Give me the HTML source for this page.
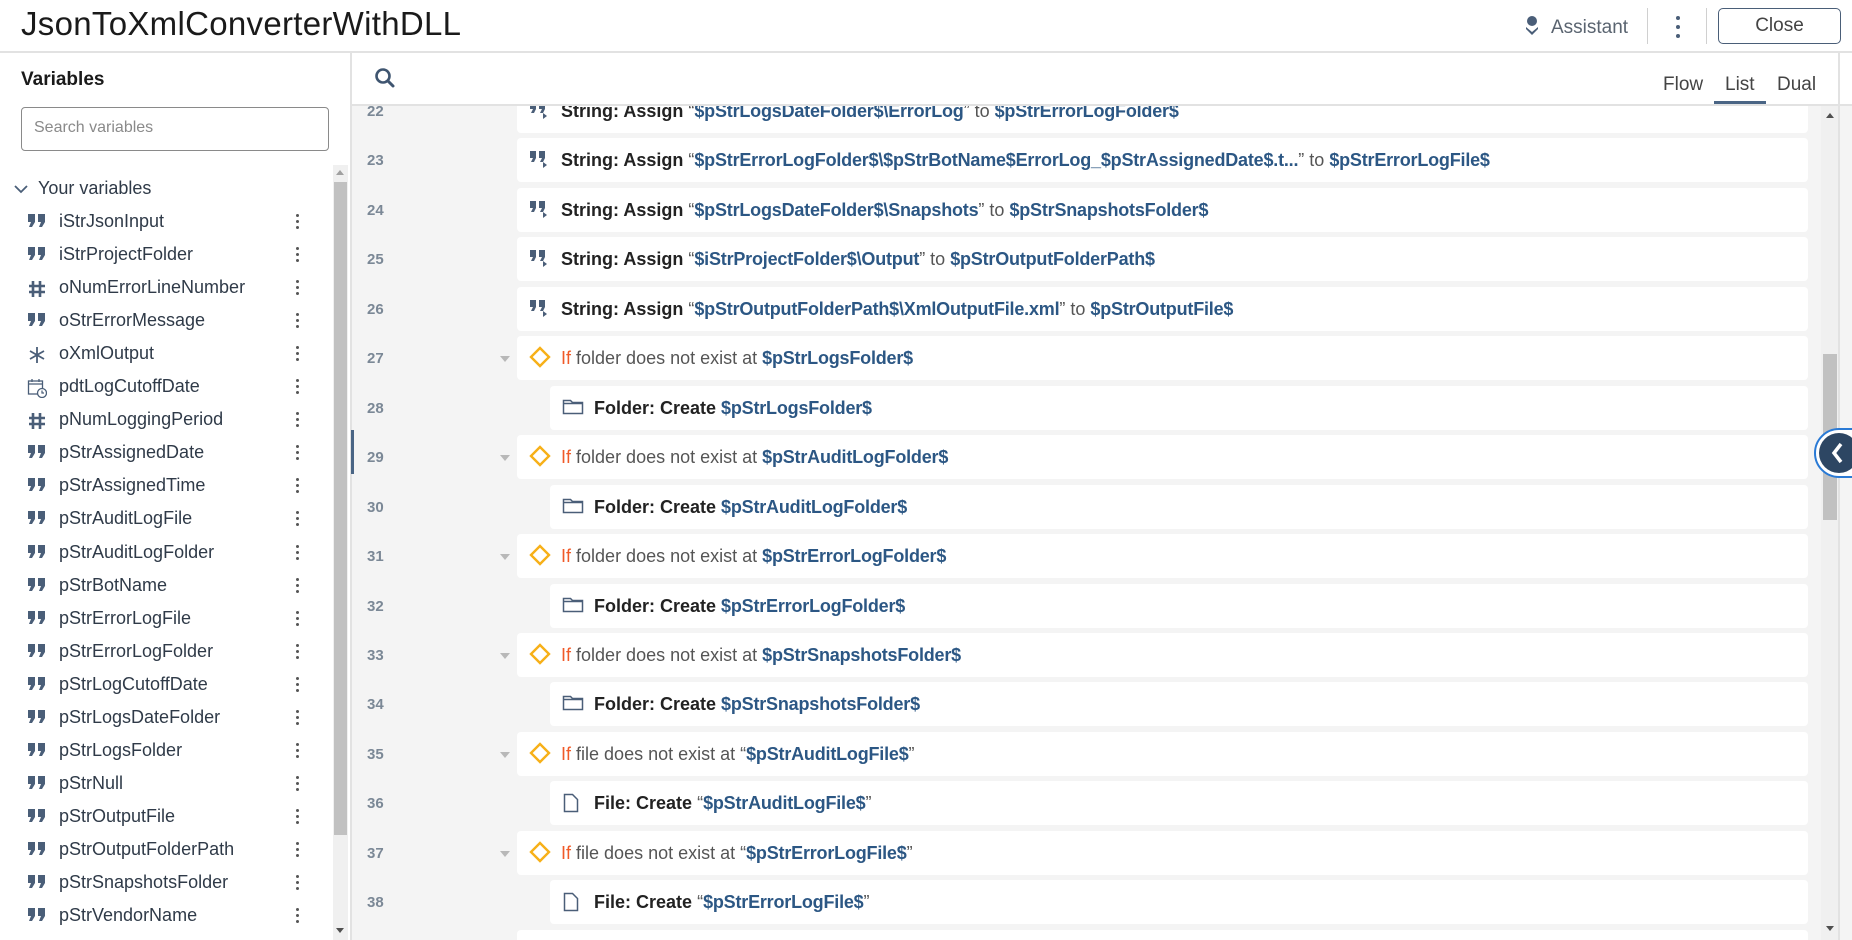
<!DOCTYPE html>
<html><head><meta charset="utf-8"><style>
*{box-sizing:border-box;margin:0;padding:0}
body{width:1852px;height:940px;overflow:hidden;background:#fff;font-family:"Liberation Sans",sans-serif;position:relative;color:#222}
.a{position:absolute}
#hdr{left:0;top:0;width:1852px;height:53px;border-bottom:2px solid #e2e2e2}
#title{left:21px;top:5px;font-size:33px;color:#1a1a1a;letter-spacing:0.3px}
#left{left:0;top:53px;width:352px;height:887px;border-right:2px solid #e2e2e2}
.var{position:absolute;left:27px;height:24px;font-size:18px;color:#2f3a48;width:290px}
.var .ic{position:absolute;left:0;top:2px;width:20px;height:20px}
.var .nm{position:absolute;left:32px;top:0px}
.var .dots{position:absolute;left:269px;top:3px;width:4px}
.dots i{display:block;width:3px;height:3px;border-radius:50%;background:#555;margin-bottom:3px}
#content{left:352px;top:106px;width:1500px;height:834px;background:#f4f4f4;overflow:hidden}
.row{position:absolute;left:0;width:1456px;height:49.5px}
.num{position:absolute;left:15px;font-size:15px;font-weight:bold;color:#7b8896}
.card{position:absolute;left:165px;right:0;height:44px;background:#fff;border-radius:4px;font-size:18px;white-space:nowrap}
.card.ind{left:198px}
.card .t{position:absolute;left:44px;top:12px}
.ic2{position:absolute;left:12px;top:12px}
b{color:#222}
.v{color:#2c5784;font-weight:bold;letter-spacing:-0.2px}
.g{color:#555}
.if{color:#f05a28}
.tri{position:absolute;left:148px;top:20px;width:0;height:0;border-left:5px solid transparent;border-right:5px solid transparent;border-top:6px solid #b8b8b8}
</style></head><body>
<div class="a" id="hdr"></div>
<div class="a" id="title">JsonToXmlConverterWithDLL</div>
<svg class="a" style="left:1524px;top:15px" width="16" height="22" viewBox="0 0 16 22"><circle cx="8" cy="6" r="5" fill="#4a5e78"/><path d="M2 12 L8 17 L14 12 L14 14 L8 20 L2 14Z" fill="#4a5e78"/></svg>
<div class="a" style="left:1551px;top:17px;font-size:19px;color:#5a6470">Assistant</div>
<div class="a" style="left:1647px;top:8px;width:1px;height:36px;background:#d0d0d0"></div>
<div class="a dots" style="left:1676px;top:16px"><i style="width:4px;height:4px;margin-bottom:5px;background:#4a5e78"></i><i style="width:4px;height:4px;margin-bottom:5px;background:#4a5e78"></i><i style="width:4px;height:4px;background:#4a5e78"></i></div>
<div class="a" style="left:1706px;top:8px;width:1px;height:36px;background:#d0d0d0"></div>
<div class="a" style="left:1718px;top:8px;width:123px;height:36px;border:1.5px solid #4a5e78;border-radius:5px;font-size:19px;color:#444;text-align:center;line-height:33px">Close</div>

<div class="a" id="left"></div>
<div class="a" style="left:21px;top:69px;font-size:19px;font-weight:bold;color:#1a1a1a">Variables</div>
<div class="a" style="left:21px;top:107px;width:308px;height:44px;border:1px solid #8a8a8a;border-radius:4px;font-size:16px;color:#8a8a8a;padding:11px 12px">Search variables</div>
<svg class="a" style="left:13px;top:183px" width="16" height="12"><path d="M2 3 L8 9 L14 3" fill="none" stroke="#4a5e78" stroke-width="1.8"/></svg>
<div class="a" style="left:38px;top:178px;font-size:18px;color:#2f3a48">Your variables</div>
<div class="a" style="left:333px;top:165px;width:15px;height:775px;background:#f0f0f0"></div>
<div class="a" style="left:334px;top:182px;width:13px;height:653px;background:#c1c1c1"></div>
<div class="a" style="left:336px;top:170px;border-left:4px solid transparent;border-right:4px solid transparent;border-bottom:5px solid #a0a0a0"></div>
<div class="a" style="left:336px;top:928px;border-left:4px solid transparent;border-right:4px solid transparent;border-top:5px solid #505050"></div>

<div id="vars"></div>

<div class="a" style="left:352px;top:53px;width:1500px;height:53px;border-bottom:2px solid #e2e2e2"></div>
<svg class="a" style="left:374px;top:67px" width="22" height="22" viewBox="0 0 22 22"><circle cx="9" cy="9" r="6.5" fill="none" stroke="#3f5570" stroke-width="2.6"/><path d="M14 14 L19 19" stroke="#3f5570" stroke-width="3" stroke-linecap="round"/></svg>
<div class="a" style="left:1663px;top:74px;font-size:19px;color:#444">Flow</div>
<div class="a" style="left:1725px;top:74px;font-size:19px;color:#444">List</div>
<div class="a" style="left:1714px;top:101px;width:52px;height:3px;background:#4a6585"></div>
<div class="a" style="left:1777px;top:74px;font-size:19px;color:#444">Dual</div>

<div class="a" id="content"><div id="rows"></div></div>
<div class="a" style="left:1821px;top:106px;width:17px;height:834px;background:#f0f0f0"></div>
<div class="a" style="left:1823px;top:354px;width:14px;height:166px;background:#c1c1c1"></div>
<div class="a" style="left:1826px;top:113px;border-left:4px solid transparent;border-right:4px solid transparent;border-bottom:5px solid #505050"></div>
<div class="a" style="left:1826px;top:926px;border-left:4px solid transparent;border-right:4px solid transparent;border-top:5px solid #505050"></div>
<div class="a" style="left:1838px;top:53px;width:2px;height:887px;background:#e2e2e2"></div>
<div class="a" style="left:351px;top:430px;width:3px;height:44px;background:#4a6585"></div>
<div class="a" style="left:1814px;top:428px;width:50px;height:50px;border:2px solid #2a7ad5;border-radius:25px 0 0 25px;background:#fff"></div>
<div class="a" style="left:1819px;top:433px;width:40px;height:40px;border-radius:50%;background:#2d4663"></div>
<svg class="a" style="left:1830px;top:441px" width="16" height="24"><path d="M11 3 L4 12 L11 21" fill="none" stroke="#fff" stroke-width="3.5"/></svg>

<script>
const Q='<svg width="20" height="18" viewBox="0 0 20 18"><path d="M1 1h7v8l-3 5h-3l2-5h-3z M11 1h7v8l-3 5h-3l2-5h-3z" fill="#4a5e78"/></svg>';
const H='<svg width="20" height="20" viewBox="0 0 20 20"><path d="M6 2v16M13 2v16M2 7h16M2 13h16" stroke="#4a5e78" stroke-width="2.6"/></svg>';
const S='<svg width="20" height="20" viewBox="0 0 20 20"><path d="M10 2v16M3 6l14 8M3 14l14-8" stroke="#4a5e78" stroke-width="1.8"/></svg>';
const D='<svg width="20" height="20" viewBox="0 0 20 20"><rect x="1.5" y="3" width="14" height="13" fill="none" stroke="#4a5e78" stroke-width="1.3"/><path d="M1.5 6h14M5 1v3M12 1v3" stroke="#4a5e78" stroke-width="1.3"/><circle cx="15" cy="15" r="4.5" fill="#fff" stroke="#4a5e78" stroke-width="1.3"/><path d="M15 12.5v2.5h2" stroke="#4a5e78" stroke-width="1.2" fill="none"/></svg>';
const vars=[["iStrJsonInput",Q],["iStrProjectFolder",Q],["oNumErrorLineNumber",H],["oStrErrorMessage",Q],["oXmlOutput",S],["pdtLogCutoffDate",D],["pNumLoggingPeriod",H],["pStrAssignedDate",Q],["pStrAssignedTime",Q],["pStrAuditLogFile",Q],["pStrAuditLogFolder",Q],["pStrBotName",Q],["pStrErrorLogFile",Q],["pStrErrorLogFolder",Q],["pStrLogCutoffDate",Q],["pStrLogsDateFolder",Q],["pStrLogsFolder",Q],["pStrNull",Q],["pStrOutputFile",Q],["pStrOutputFolderPath",Q],["pStrSnapshotsFolder",Q],["pStrVendorName",Q]];
let h='';vars.forEach((v,i)=>{h+=`<div class="var" style="top:${211+33.05*i}px"><span class="ic">${v[1]}</span><span class="nm">${v[0]}</span><span class="dots"><i></i><i></i><i></i></span></div>`});
document.getElementById('vars').innerHTML=h;
const QI='<svg width="20" height="20" viewBox="0 0 20 20"><path d="M1 1h6v7l-2 4h-3l2-4h-3z M10 1h6v7l-2 4h-3l2-4h-3z" fill="#4a5e78"/><path d="M14 12l4 3l-4 3z" fill="#4a5e78"/></svg>';
const DI='<svg width="22" height="22" viewBox="0 0 22 22"><path d="M11 2L20 11L11 20L2 11Z" fill="none" stroke="#f7b018" stroke-width="2.4"/></svg>';
const FO='<svg width="22" height="18" viewBox="0 0 22 18"><path d="M1.5 2.5h7l2 2h10v11h-19z" fill="none" stroke="#4a5e78" stroke-width="1.5"/><path d="M1.5 5.5h19" stroke="#4a5e78" stroke-width="1.5"/></svg>';
const FI='<svg width="18" height="20" viewBox="0 0 18 20"><path d="M2.5 1.5h8l5 5v12h-13z" fill="none" stroke="#4a5e78" stroke-width="1.5"/></svg>';
const asg=(a,b)=>({t:'a',h:`<b>String: Assign</b> <span class="g">“</span><span class="v">${a}</span><span class="g">” to </span><span class="v">${b}</span>`});
const rows=[asg('$pStrLogsDateFolder$\\ErrorLog','$pStrErrorLogFolder$'),asg('$pStrErrorLogFolder$\\$pStrBotName$ErrorLog_$pStrAssignedDate$.t...','$pStrErrorLogFile$'),asg('$pStrLogsDateFolder$\\Snapshots','$pStrSnapshotsFolder$'),asg('$iStrProjectFolder$\\Output','$pStrOutputFolderPath$'),asg('$pStrOutputFolderPath$\\XmlOutputFile.xml','$pStrOutputFile$')];
const ifr=(k,v,q)=>({t:'i',h:`<span class="if">If</span> <span class="g">${k} does not exist at ${q?'“':''}</span><span class="v">${v}</span><span class="g">${q?'”':''}</span>`});
const fc=v=>({t:'f',h:`<b>Folder: Create</b> <span class="v">${v}</span>`});
const fl=v=>({t:'l',h:`<b>File: Create</b> <span class="g">“</span><span class="v">${v}</span><span class="g">”</span>`});
rows.push(ifr('folder','$pStrLogsFolder$'),fc('$pStrLogsFolder$'),ifr('folder','$pStrAuditLogFolder$'),fc('$pStrAuditLogFolder$'),ifr('folder','$pStrErrorLogFolder$'),fc('$pStrErrorLogFolder$'),ifr('folder','$pStrSnapshotsFolder$'),fc('$pStrSnapshotsFolder$'),ifr('file','$pStrAuditLogFile$',1),fl('$pStrAuditLogFile$'),ifr('file','$pStrErrorLogFile$',1),fl('$pStrErrorLogFile$'),{t:'x',h:''});
let r='';rows.forEach((o,i)=>{const top=-17+49.45*i;const ind=(o.t=='f'||o.t=='l');const ic=o.t=='a'?QI:o.t=='i'?DI:o.t=='f'?FO:o.t=='l'?FI:'';
r+=`<div class="row" style="top:${top}px">${o.t!='x'?`<span class="num" style="top:14px">${22+i}</span>`:''}${o.t=='i'?'<span class="tri"></span>':''}<div class="card${ind?' ind':''}" style="top:0"><span class="ic2" style="top:${o.t=='i'?10:12}px">${ic}</span><span class="t">${o.h}</span></div></div>`});
document.getElementById('rows').innerHTML=r;
</script>
</body></html>
